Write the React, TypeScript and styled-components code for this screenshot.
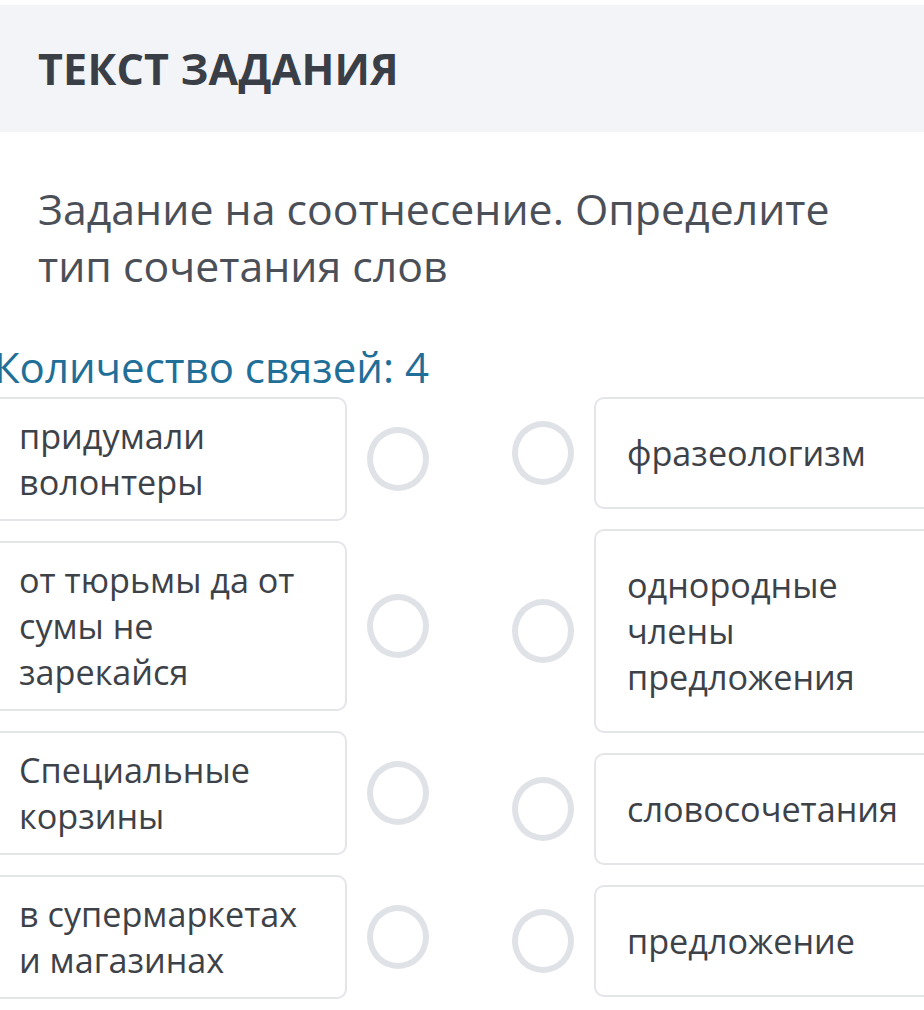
import React from "react";
import styled, { createGlobalStyle } from "styled-components";

const GlobalStyle = createGlobalStyle`
  html, body {
    margin: 0;
    padding: 0;
    background: #ffffff;
    overflow: hidden;
  }
  body {
    font-family: "Open Sans", "Noto Sans", sans-serif;
  }
`;

const Page = styled.div`
  width: 924px;
  height: 1010px;
  padding-top: 5px;
  box-sizing: border-box;
  overflow: hidden;
`;

const TitleBar = styled.header`
  height: 127px;
  padding: 0 38px;
  display: flex;
  align-items: center;
  background-color: #f3f4f7;

  h1 {
    margin: 0;
    padding-top: 0;
    font-size: 43px;
    font-weight: 700;
    color: #3a3f47;
    letter-spacing: 0.2px;
  }
`;

const Question = styled.p`
  margin: 48px 0 0;
  padding: 0 38px;
  font-size: 42.8px;
  line-height: 57px;
  color: #4b5058;
`;

const LinksCount = styled.div`
  margin: 47px 0 5px -6px;
  font-size: 42px;
  line-height: 51px;
  color: #1f6f98;
`;

const Matching = styled.div`
  display: grid;
  grid-template-columns: 441px 1fr;
  column-gap: 83px;
  margin-left: -12px;
  align-items: start;
`;

const Column = styled.div`
  display: flex;
  flex-direction: column;
  gap: 20px;
`;

const Item = styled.div`
  display: flex;
  align-items: center;
  gap: 20px;
`;

const Card = styled.div<{ $side: "left" | "right" }>`
  box-sizing: border-box;
  border: 2px solid #e3e5e9;
  border-radius: 10px;
  background: #ffffff;
  font-size: 34.2px;
  line-height: 46px;
  color: #3d4249;
  ${({ $side }) =>
    $side === "left"
      ? `
    width: 359px;
    min-height: 124px;
    padding: 14px 34px 14px 29px;
  `
      : `
    width: 370px;
    min-height: 112px;
    padding: 31px 20px 31px 31px;
    display: flex;
    align-items: center;
  `}
`;

const Dot = styled.div`
  flex: none;
  box-sizing: border-box;
  width: 62px;
  height: 64px;
  border: 6px solid #dfe2e6;
  border-radius: 50%;
  background: #ffffff;
`;

const leftItems = [
  "придумали волонтеры",
  "от тюрьмы да от сумы не зарекайся",
  "Специальные корзины",
  "в супермаркетах и магазинах",
];

const rightItems = [
  "фразеологизм",
  "однородные члены предложения",
  "словосочетания",
  "предложение",
];

const App = () => {
  return (
    <Page>
      <GlobalStyle />
      <TitleBar>
        <h1>ТЕКСТ ЗАДАНИЯ</h1>
      </TitleBar>
      <Question>
        Задание на соотнесение. Определите
        <br />
        тип сочетания слов
      </Question>
      <LinksCount>Количество связей: 4</LinksCount>
      <Matching>
        <Column>
          {leftItems.map((text) => (
            <Item key={text}>
              <Card $side="left">{text}</Card>
              <Dot />
            </Item>
          ))}
        </Column>
        <Column>
          {rightItems.map((text) => (
            <Item key={text}>
              <Dot />
              <Card $side="right">{text}</Card>
            </Item>
          ))}
        </Column>
      </Matching>
    </Page>
  );
};

export default App;
